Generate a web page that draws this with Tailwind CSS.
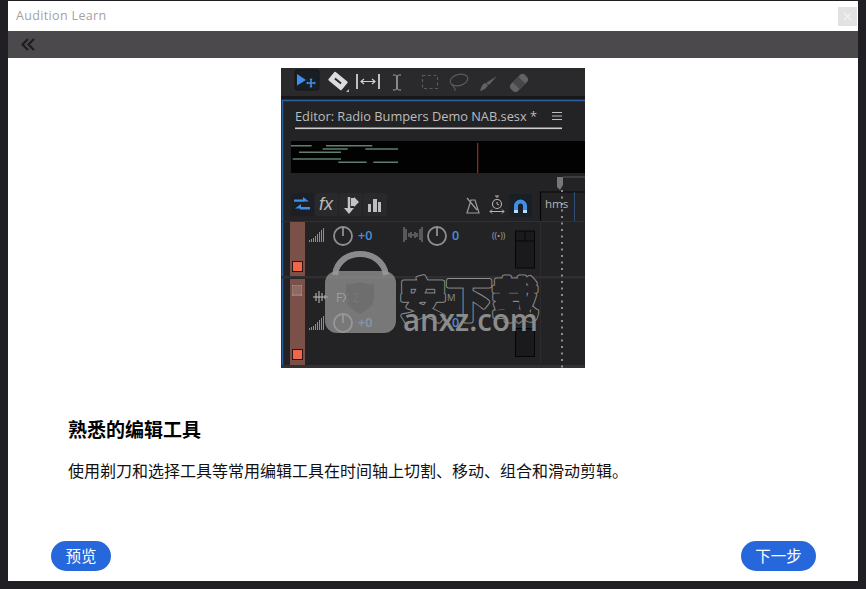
<!DOCTYPE html>
<html lang="zh">
<head>
<meta charset="utf-8">
<title>Audition Learn</title>
<script src="https://cdn.jsdelivr.net/npm/@tailwindcss/browser@4"></script>
</head>
<body class="bg-[#202024] font-['Noto_Sans_CJK_SC','Noto_Sans',sans-serif]">
<div class="w-[866px] h-[589px] pt-px pr-2 pb-2 pl-2 overflow-hidden">
  <div class="w-[850px] h-[580px] flex flex-col bg-white">
    <!-- title bar -->
    <div class="h-[30px] flex items-center justify-between pl-2 pr-px">
      <span class="text-[12.5px] tracking-[0.35px] text-[#a3a3a3] font-['Open_Sans',sans-serif]">Audition Learn</span>
      <div class="w-[19px] h-[19px] bg-[#e2e2e3] flex items-center justify-center">
        <svg width="9" height="9" viewBox="0 0 9 9" fill="none" stroke="#f1f1f1" stroke-width="1.4"><path d="M1 1l7 7M8 1L1 8"/></svg>
      </div>
    </div>
    <!-- back bar -->
    <div class="h-[27px] bg-[#4b494c] flex items-center pl-[13px]">
      <svg width="14" height="14" viewBox="0 0 14 14" fill="none" stroke="#1e1e22" stroke-width="2.2"><path d="M7 1L1.500 6.500 7 12M13 1L7.500 6.500 13 12"/></svg>
    </div>
    <!-- tutorial picture -->
    <div class="flex justify-center pt-[10px]">
      <svg width="304" height="300" viewBox="281 68 304 300" class="block" font-family="'Open Sans',sans-serif">
        <rect x="281" y="68" width="304" height="300" fill="#232325"/>
        <rect x="281" y="68" width="304" height="29" fill="#2a2a2c"/>
        <rect x="281" y="96" width="304" height="3" fill="#17181b"/>
        <!-- tools -->
        <rect x="295" y="70" width="24" height="20" rx="2" fill="#191d24" stroke="#151618"/>
        <path d="M297 74l9 6-9 5.500z" fill="#3f8fe8"/>
        <path d="M311 79v8M307 83h8" stroke="#3f8fe8" stroke-width="1.600"/>
        <path d="M309.500 80l1.500-2 1.500 2zM309.500 86l1.500 2 1.500-2zM308 81.500l-2 1.500 2 1.500zM314 81.500l2 1.500-2 1.500z" fill="#3f8fe8"/>
        <g transform="rotate(40 338 81)"><rect x="329.500" y="75.500" width="17" height="11" rx="1" fill="#dcdcdc"/><rect x="334" y="80" width="8" height="2" fill="#2a2a2c"/></g>
        <path d="M346 92l3-3v3z" fill="#bbb"/>
        <path d="M357 74v15M379 74v15" stroke="#cfcfcf" stroke-width="1.800"/>
        <path d="M361 81.500h14M364 79l-3 2.500 3 2.500M372 79l3 2.500-3 2.500" stroke="#cfcfcf" stroke-width="1.200" fill="none"/>
        <path d="M393 75c2 0 4 0 4 2v11c0 2-2 2-4 2M401 75c-2 0-4 0-4 2v11c0 2 2 2 4 2" stroke="#a8a8a8" fill="none"/>
        <rect x="422.500" y="75.500" width="15" height="13" fill="none" stroke="#5a5a5c" stroke-width="1.200" stroke-dasharray="3 2.500"/>
        <ellipse cx="459" cy="80" rx="9" ry="5.500" transform="rotate(-15 459 80)" fill="none" stroke="#5a5a5c" stroke-width="1.200"/>
        <path d="M452 84c1 3 4 4 3 7" fill="none" stroke="#5a5a5c" stroke-width="1.200"/>
        <path d="M497 76l-8 9-3-2zM488 85c-1 3-4 5-8 6 1-3 2-7 5-8z" fill="#626264"/>
        <g transform="rotate(-45 519 83)"><rect x="509" y="78" width="20" height="10" rx="4" fill="#626264"/><rect x="515" y="78" width="8" height="10" fill="#474749"/></g>
        <!-- editor panel -->
        <path d="M282.500 368V100.500H585" fill="none" stroke="#2f5f9e" stroke-width="1.500"/>
        <text x="295" y="121" font-size="12" fill="#bdbdbd" textLength="242" lengthAdjust="spacingAndGlyphs">Editor: Radio Bumpers Demo NAB.sesx *</text>
        <path d="M552 112.500h10M552 116h10M552 119.500h10" stroke="#bdbdbd" stroke-width="1.100"/>
        <rect x="295" y="127.500" width="267" height="1.600" fill="#cfcfcf"/>
        <rect x="291" y="141" width="294" height="32" fill="#020203"/>
        <g stroke="#607f70" stroke-width="1.500">
          <path d="M291 145.700h20.700M326 145.700h46.300M322.700 149h25M365.300 149h32.700M299 152.300h42M292.700 159h48.300M338.300 162.300h28.400M373.300 162.300h24.700"/>
        </g>
        <rect x="477" y="143" width="1.300" height="30" fill="#8e2a20"/>
        <!-- ruler -->
        <rect x="563" y="176.500" width="22" height="1" fill="#565658"/>
        <path d="M557 177h6v8l-3 5-3-3z" fill="#77777a"/>
        <path d="M540.500 222v-30H585" fill="none" stroke="#060607" stroke-width="1.200"/>
        <text x="545" y="208" font-size="11.500" fill="#b5b5b5">hms</text>
        <rect x="574" y="192" width="1" height="29" fill="#2f4f78"/>
        <!-- track controls -->
        <g fill="#29292b">
          <rect x="291" y="193" width="23" height="23" rx="2" fill="#1c1f25"/>
          <rect x="315" y="193" width="23" height="23" rx="2"/>
          <rect x="339" y="193" width="23" height="23" rx="2"/>
          <rect x="363" y="193" width="24" height="23" rx="2"/>
        </g>
        <path d="M294 200h9v-3l6 4.500-0 0h-15zM310 207h-9v-3l-6 4.500 0 0h15z" fill="#3f8fe8"/>
        <path d="M294 200.500h10M310 208.500h-10" stroke="#3f8fe8" stroke-width="2"/>
        <text x="319" y="210" font-size="18" font-style="italic" fill="#b9b9b9" font-family="'Liberation Sans',sans-serif">fx</text>
        <path d="M349 197v12" stroke="#c4c4c4" stroke-width="2.500"/>
        <path d="M344 208h10l-5 6zM351 198h3v-1l5 5-5 5v-1h-3z" fill="#c4c4c4"/>
        <g fill="#bdbdbd"><rect x="368" y="204" width="3" height="8"/><rect x="373" y="199" width="4" height="13"/><rect x="378" y="202" width="3" height="10"/></g>
        <!-- metronome, clock, magnet -->
        <path d="M471 200h4l4 13h-12zM467 198l10 12" fill="none" stroke="#9c9c9c" stroke-width="1.200"/>
        <circle cx="497" cy="204" r="4.500" fill="none" stroke="#b5b5b5" stroke-width="1.100"/>
        <path d="M497 198v-2M495 196h4M497 202v2l2 1M490 211.500h14M492 209.500l-2 2 2 2M502 209.500l2 2-2 2" fill="none" stroke="#b5b5b5" stroke-width="1"/>
        <rect x="509" y="194" width="23" height="23" rx="2" fill="#191f27"/>
        <path d="M516 212v-6a4.500 4.500 0 0 1 9 0v6" fill="none" stroke="#3f8fe8" stroke-width="4"/>
        <path d="M514 210h4v3h-4zM523 210h4v3h-4z" fill="#b9dcff"/>
        <!-- separators -->
        <rect x="281" y="221" width="304" height="1" fill="#303032"/>
        <rect x="281" y="276" width="304" height="2.500" fill="#2f2f31"/>
        <rect x="281" y="365" width="304" height="3" fill="#313133"/>
        <rect x="540" y="222" width="1" height="146" fill="#2c2c2e"/>
        <!-- dotted playhead -->
        <path d="M562 190v178" stroke="#d5d5d5" stroke-width="1.200" stroke-dasharray="2 4.500"/>
        <!-- track 1 -->
        <rect x="290" y="222" width="15" height="54" fill="#7a5048"/>
        <rect x="292.500" y="261.500" width="10" height="10" fill="#f0664a" stroke="#2a1512"/>
        <g fill="#8f8f8f"><rect x="309" y="240" width="1" height="2"/><rect x="311" y="239" width="1" height="3"/><rect x="313" y="238" width="1" height="4"/><rect x="315" y="236" width="1" height="6"/><rect x="317" y="234" width="1" height="8"/><rect x="319" y="232" width="1" height="10"/><rect x="321" y="230" width="1" height="12"/><rect x="323" y="228" width="1" height="14"/></g>
        <circle cx="343" cy="236" r="9" fill="none" stroke="#8f8f8f" stroke-width="1.800"/>
        <path d="M343 227v9" stroke="#8f8f8f" stroke-width="1.800"/>
        <text x="358" y="240" font-size="12.500" font-weight="600" fill="#4a90d9">+0</text>
        <path d="M404 227v15M406 229v11M422 227v15M420 229v11M409 233v4M411 232v6M413 234v2M415 232v6M417 233v4" stroke="#8f8f8f" stroke-width="1"/>
        <circle cx="437" cy="236" r="9" fill="none" stroke="#8f8f8f" stroke-width="1.800"/>
        <path d="M437 227v9" stroke="#8f8f8f" stroke-width="1.800"/>
        <text x="452" y="240" font-size="12.500" font-weight="600" fill="#4a90d9">0</text>
        <text x="492" y="239" font-size="8.500" fill="#a5a5a5">((•))</text>
        <rect x="515.500" y="231" width="19" height="37" fill="#1a1a1c" stroke="#060607"/>
        <path d="M515.500 241h19M525 231v10" stroke="#060607"/>
        <!-- track 2 -->
        <rect x="290" y="279" width="15" height="86" fill="#7a5048"/>
        <rect x="292" y="285" width="10" height="11" fill="#a88f88"/>
        <path d="M292 287h10M292 289h10M292 291h10M292 293h10M294 285v11M296 285v11M298 285v11M300 285v11" stroke="#7a5048" stroke-width=".7"/>
        <rect x="292.500" y="349.500" width="10" height="10" fill="#f0664a" stroke="#2a1512"/>
        <path d="M313 297h15M316 293v8M319 291v12M322 293v8M325 295v4" stroke="#c4c4c4" stroke-width="1"/>
        <text x="336" y="302" font-size="12" fill="#a8a8a8">FX 2</text>
        <text x="447" y="301" font-size="9.500" fill="#8a8a8a">M</text>
        <text x="475" y="301" font-size="9.500" fill="#666">S</text>
        <g fill="#8f8f8f"><rect x="309" y="328" width="1" height="2"/><rect x="311" y="327" width="1" height="3"/><rect x="313" y="326" width="1" height="4"/><rect x="315" y="324" width="1" height="6"/><rect x="317" y="322" width="1" height="8"/><rect x="319" y="320" width="1" height="10"/><rect x="321" y="318" width="1" height="12"/><rect x="323" y="316" width="1" height="14"/></g>
        <circle cx="343" cy="323" r="9" fill="none" stroke="#8f8f8f" stroke-width="1.800"/>
        <path d="M343 314v9" stroke="#8f8f8f" stroke-width="1.800"/>
        <text x="358" y="327" font-size="12.500" font-weight="600" fill="#4a90d9">+0</text>
        <text x="452" y="327" font-size="12.500" font-weight="600" fill="#4a90d9">0</text>
        <rect x="515.500" y="328.500" width="19" height="28" fill="#1a1a1c" stroke="#060607"/>
        <!-- watermark -->
        <path d="M335 275c3-28 47-28 51 0" fill="none" stroke="#8a8a8a" stroke-width="6"/>
        <rect x="325" y="271" width="71" height="62" rx="12" fill="#9a9a9a" fill-opacity=".72"/>
        <path d="M346 284c6 1 10-1 14-2 4 1 8 3 14 2v14c0 8-8 13-14 16-6-3-14-8-14-16z" fill="#6b6b6b" fill-opacity=".75"/>
        <g font-family="'Noto Sans CJK SC',sans-serif" font-size="46" font-weight="700">
          <text x="400" y="316" stroke="#8c8c8c" stroke-width="5" stroke-linejoin="round" fill="#8c8c8c">安下载</text>
          <text x="400" y="316" stroke="#232325" stroke-width="3" stroke-linejoin="round" fill="#232325">安下载</text>
        </g>
        <text x="403" y="331" font-size="31" font-weight="600" fill="#8c8c8c" textLength="135" lengthAdjust="spacingAndGlyphs">anxz.com</text>
      </svg>
    </div>
    <!-- copy -->
    <div class="pl-[60px] pt-[47px]">
      <h1 class="text-[19px] leading-[28px] font-bold text-black">熟悉的编辑工具</h1>
      <p class="mt-[15px] text-base leading-6 text-[#111]">使用剃刀和选择工具等常用编辑工具在时间轴上切割、移动、组合和滑动剪辑。</p>
    </div>
    <!-- footer buttons -->
    <div class="mt-auto flex justify-between pl-[43px] pr-[42px] pb-[10px]">
      <button class="w-[60px] h-[30px] rounded-full bg-[#2767dc] text-white text-[15.5px] flex items-center justify-center">预览</button>
      <button class="w-[75px] h-[30px] rounded-full bg-[#2767dc] text-white text-[15.5px] flex items-center justify-center">下一步</button>
    </div>
  </div>
</div>
</body>
</html>
